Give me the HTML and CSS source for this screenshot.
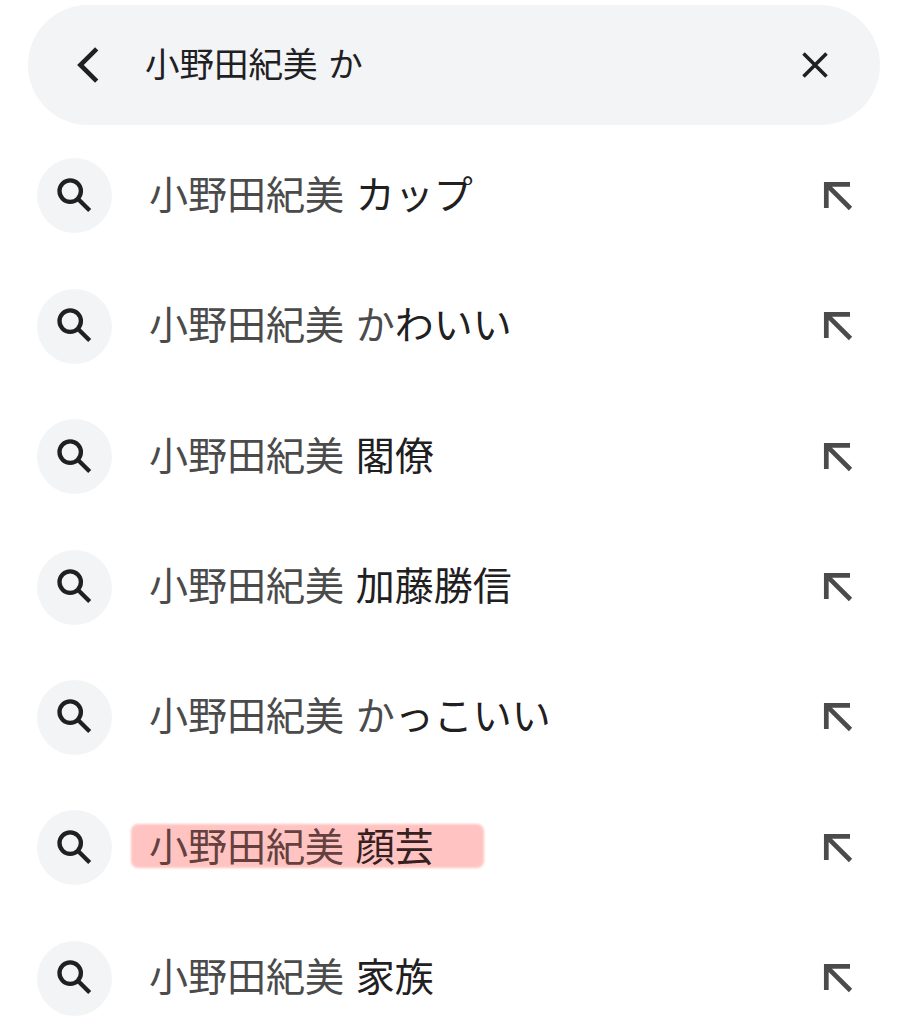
FILE: index.html
```html
<!DOCTYPE html>
<html lang="ja">
<head>
<meta charset="utf-8">
<title>小野田紀美 か</title>
<link rel="stylesheet" href="styles.css">
</head>
<body>
<svg class="defs" width="0" height="0" aria-hidden="true">
<symbol id="search" viewBox="0 0 36 36"><circle cx="13.2" cy="13.1" r="10.7"/><path d="M20.3 20.2L32.7 32.5"/></symbol>
<symbol id="fill" viewBox="0 0 30 30"><path d="M27 3.3H3.3V27M3.3 3.3L27.5 27.5"/></symbol>
</svg>
<header class="searchbar">
<svg class="back" viewBox="0 0 22 36"><path d="M19.7 1.8L3.4 18L19.7 34.2"/></svg>
<span class="query">小野田紀美 か</span>
<svg class="clear" viewBox="0 0 26 26"><path d="M1.5 1.5L24.5 24.5M24.5 1.5L1.5 24.5"/></svg>
</header>
<main class="list">
<div class="row"><span class="badge"><svg class="search"><use href="#search"/></svg></span><span class="text">小野田紀美 <b>カップ</b></span><svg class="arrow"><use href="#fill"/></svg></div>
<div class="row"><span class="badge"><svg class="search"><use href="#search"/></svg></span><span class="text">小野田紀美 か<b>わいい</b></span><svg class="arrow"><use href="#fill"/></svg></div>
<div class="row"><span class="badge"><svg class="search"><use href="#search"/></svg></span><span class="text">小野田紀美 <b>閣僚</b></span><svg class="arrow"><use href="#fill"/></svg></div>
<div class="row"><span class="badge"><svg class="search"><use href="#search"/></svg></span><span class="text">小野田紀美 <b>加藤勝信</b></span><svg class="arrow"><use href="#fill"/></svg></div>
<div class="row"><span class="badge"><svg class="search"><use href="#search"/></svg></span><span class="text">小野田紀美 か<b>っこいい</b></span><svg class="arrow"><use href="#fill"/></svg></div>
<div class="row"><span class="badge"><svg class="search"><use href="#search"/></svg></span><span class="text marked">小野田紀美 <b>顔芸</b></span><svg class="arrow"><use href="#fill"/></svg></div>
<div class="row"><span class="badge"><svg class="search"><use href="#search"/></svg></span><span class="text">小野田紀美 <b>家族</b></span><svg class="arrow"><use href="#fill"/></svg></div>
</main>
</body>
</html>
```

FILE: styles.css
```css
* { box-sizing: border-box; }
body {
  margin: 0;
  height: 1024px;
  overflow: hidden;
  background: #fff;
  color: #1f2022;
  font-family: "Noto Sans CJK JP", sans-serif;
}
svg { fill: none; stroke: #1f2022; flex: none; }
.defs { position: absolute; }
.searchbar {
  display: flex;
  align-items: center;
  height: 120px;
  margin: 5px 28px 0;
  padding: 0 52px 0 49px;
  border-radius: 60px;
  background: #f2f4f6;
}
.back { width: 22px; height: 36px; stroke-width: 4.6; }
.query {
  flex: 1;
  margin-left: 46px;
  padding-bottom: 6px;
  font-size: 34.5px;
  line-height: 50px;
  word-spacing: 3px;
  white-space: nowrap;
}
.clear { width: 26px; height: 26px; stroke-width: 3.6; }
.list { padding-top: 5.7px; }
.row {
  display: flex;
  align-items: center;
  height: 130.4px;
  padding: 0 55px 0 37px;
}
.badge {
  flex: none;
  display: flex;
  align-items: center;
  justify-content: center;
  width: 75px;
  height: 75px;
  border-radius: 50%;
  background: #f2f4f6;
}
.search { width: 36px; height: 36px; stroke-width: 4.3; }
.text {
  position: relative;
  z-index: 0;
  margin-left: 37px;
  margin-right: auto;
  padding-bottom: 8px;
  color: #4b4b4b;
  font-size: 39px;
  line-height: 56px;
  word-spacing: 3px;
  white-space: nowrap;
}
.text b { color: #1f2022; font-weight: 400; }
.marked { color: #64413f; }
.marked b { color: #352022; }
.marked::before {
  content: "";
  position: absolute;
  z-index: -1;
  left: -18px;
  top: 8.5px;
  width: 353px;
  height: 44px;
  border-radius: 7px;
  background: #ffc4c1;
  filter: blur(1px);
}
.arrow { width: 30px; height: 30px; stroke: #4b4b4b; stroke-width: 4.7; }
```
